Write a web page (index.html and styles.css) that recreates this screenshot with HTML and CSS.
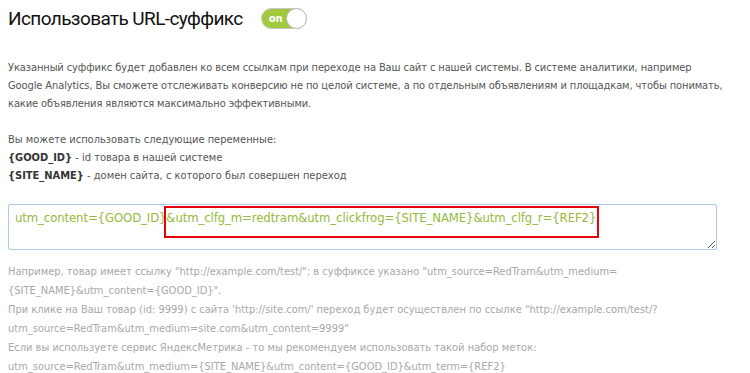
FILE: index.html
```html
<!DOCTYPE html>
<html lang="ru">
<head>
  <meta charset="UTF-8">
  <title>URL-суффикс</title>
  <link rel="stylesheet" href="styles.css">
</head>
<body>

  <div class="title-row">
    <h2>Использовать URL-суффикс</h2>
    <label class="switch">
      <span class="switch-text">on</span>
      <span class="switch-knob"></span>
    </label>
  </div>

  <p class="desc">
    Указанный суффикс будет добавлен ко всем ссылкам при переходе на Ваш сайт с нашей системы. В системе аналитики, например
    Google Analytics, Вы сможете отслеживать конверсию не по целой системе, а по отдельным объявлениям и площадкам, чтобы понимать,
    какие объявления являются максимально эффективными.
  </p>

  <p class="vars">
    Вы можете использовать следующие переменные:<br>
    <b>{GOOD_ID}</b> - id товара в нашей системе<br>
    <b>{SITE_NAME}</b> - домен сайта, с которого был совершен переход
  </p>

  <div class="suffix-box">
    <textarea class="suffix">utm_content={GOOD_ID}&amp;utm_clfg_m=redtram&amp;utm_clickfrog={SITE_NAME}&amp;utm_clfg_r={REF2}</textarea>
    <div class="mark"></div>
  </div>

  <p class="hint">
    Например, товар имеет ссылку "http://example.com/test/"; в суффиксе указано "utm_source=RedTram&amp;utm_medium=
    {SITE_NAME}&amp;utm_content={GOOD_ID}".<br>
    При клике на Ваш товар (id: 9999) с сайта 'http://site.com/' переход будет осуществлен по ссылке "http://example.com/test/?
    utm_source=RedTram&amp;utm_medium=site.com&amp;utm_content=9999"<br>
    Если вы используете сервис ЯндексМетрика - то мы рекомендуем использовать такой набор меток:<br>
    utm_source=RedTram&amp;utm_medium={SITE_NAME}&amp;utm_content={GOOD_ID}&amp;utm_term={REF2}
  </p>

</body>
</html>
```

FILE: styles.css
```css
* { box-sizing: border-box; }

body {
  margin: 0;
  padding: 0 8px;
  background: #fff;
  font-family: 'DejaVu Sans Condensed', 'DejaVu Sans', sans-serif;
  font-size: 11px;
  color: #555;
  width: 736px;
}

.title-row {
  display: flex;
  align-items: center;
  gap: 18px;
  height: 37px;
}

.title-row h2 {
  margin: 0;
  font-family: Roboto, 'Liberation Sans', sans-serif;
  font-weight: normal;
  font-size: 19px;
  letter-spacing: -0.6px;
  color: #111;
}

.switch {
  position: relative;
  width: 46px;
  height: 21px;
  border-radius: 11px;
  background: #a2c83c;
  border: 1px solid #c8c8c8;
  display: flex;
  align-items: center;
}

.switch-text {
  color: #fff;
  font-family: 'DejaVu Sans', sans-serif;
  font-weight: bold;
  font-size: 10px;
  margin-left: 7px;
}

.switch-knob {
  position: absolute;
  right: -1px;
  top: -1px;
  width: 21px;
  height: 21px;
  border-radius: 50%;
  background: #fff;
  border: 1px solid #bbb;
}

.desc {
  margin: 22px 0 0;
  line-height: 18px;
  letter-spacing: -0.1px;
}

.vars {
  margin: 18px 0 0;
  line-height: 18px;
}

.vars b {
  color: #333;
}

.suffix-box {
  position: relative;
  margin-top: 19px;
  width: 709px;
}

.suffix {
  display: block;
  width: 709px;
  height: 46px;
  padding: 4px 6px;
  border: 1px solid #a9c9ee;
  border-radius: 2px;
  font-family: 'DejaVu Sans Condensed', 'DejaVu Sans', sans-serif;
  font-size: 13px;
  letter-spacing: -0.1px;
  line-height: 18px;
  color: #94b93c;
  resize: vertical;
}

.mark {
  position: absolute;
  left: 156px;
  top: 2px;
  width: 435px;
  height: 32px;
  border: 2px solid #e8000d;
}

.hint {
  margin: 12px 0 0;
  line-height: 19px;
  color: #a8a8a8;
}
```
